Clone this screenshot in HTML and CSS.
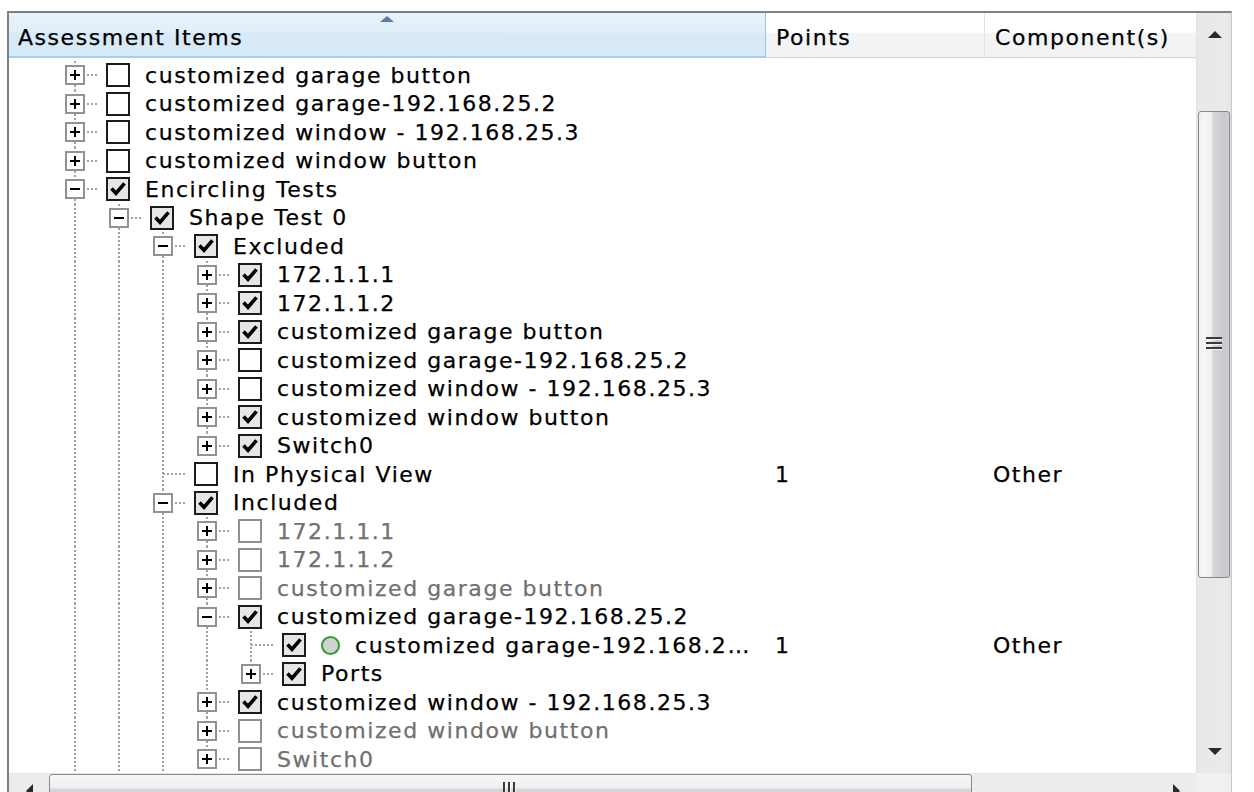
FILE: index.html
```html
<!DOCTYPE html>
<html>
<head>
<meta charset="utf-8">
<title>Assessment Items</title>
<link rel="stylesheet" href="styles.css">
</head>
<body>
<div class="frame">
  <div class="header">
    <div class="hcol h1">Assessment Items</div>
    <div class="hcol h2">Points</div>
    <div class="hcol h3">Component(s)</div>
  </div>

  <div class="vscroll">
    <div class="vbtn"><span class="arr up"></span></div>
    <div class="vthumb"><span class="grip"></span></div>
    <div class="vfill"></div>
    <div class="vbtn"><span class="arr down"></span></div>
  </div>

  <div class="body">
    <div class="row"><div class="tree"><span class="slot node next"><span class="exp plus"></span></span><span class="cb"></span><span class="label">customized garage button</span></div><div class="pts"></div><div class="comp"></div></div>
    <div class="row"><div class="tree"><span class="slot node next"><span class="exp plus"></span></span><span class="cb"></span><span class="label">customized garage-192.168.25.2</span></div><div class="pts"></div><div class="comp"></div></div>
    <div class="row"><div class="tree"><span class="slot node next"><span class="exp plus"></span></span><span class="cb"></span><span class="label">customized window - 192.168.25.3</span></div><div class="pts"></div><div class="comp"></div></div>
    <div class="row"><div class="tree"><span class="slot node next"><span class="exp plus"></span></span><span class="cb"></span><span class="label">customized window button</span></div><div class="pts"></div><div class="comp"></div></div>
    <div class="row"><div class="tree"><span class="slot node next"><span class="exp minus"></span></span><span class="cb on"><svg viewBox="0 0 20 20"><path d="M3.5 9.5 L8 14.2 L16.5 4.3"/></svg></span><span class="label">Encircling Tests</span></div><div class="pts"></div><div class="comp"></div></div>
    <div class="row"><div class="tree"><span class="slot line"></span><span class="slot node next"><span class="exp minus"></span></span><span class="cb on"><svg viewBox="0 0 20 20"><path d="M3.5 9.5 L8 14.2 L16.5 4.3"/></svg></span><span class="label">Shape Test 0</span></div><div class="pts"></div><div class="comp"></div></div>
    <div class="row"><div class="tree"><span class="slot line"></span><span class="slot line"></span><span class="slot node next"><span class="exp minus"></span></span><span class="cb on"><svg viewBox="0 0 20 20"><path d="M3.5 9.5 L8 14.2 L16.5 4.3"/></svg></span><span class="label">Excluded</span></div><div class="pts"></div><div class="comp"></div></div>
    <div class="row"><div class="tree"><span class="slot line"></span><span class="slot line"></span><span class="slot line"></span><span class="slot node next"><span class="exp plus"></span></span><span class="cb on"><svg viewBox="0 0 20 20"><path d="M3.5 9.5 L8 14.2 L16.5 4.3"/></svg></span><span class="label">172.1.1.1</span></div><div class="pts"></div><div class="comp"></div></div>
    <div class="row"><div class="tree"><span class="slot line"></span><span class="slot line"></span><span class="slot line"></span><span class="slot node next"><span class="exp plus"></span></span><span class="cb on"><svg viewBox="0 0 20 20"><path d="M3.5 9.5 L8 14.2 L16.5 4.3"/></svg></span><span class="label">172.1.1.2</span></div><div class="pts"></div><div class="comp"></div></div>
    <div class="row"><div class="tree"><span class="slot line"></span><span class="slot line"></span><span class="slot line"></span><span class="slot node next"><span class="exp plus"></span></span><span class="cb on"><svg viewBox="0 0 20 20"><path d="M3.5 9.5 L8 14.2 L16.5 4.3"/></svg></span><span class="label">customized garage button</span></div><div class="pts"></div><div class="comp"></div></div>
    <div class="row"><div class="tree"><span class="slot line"></span><span class="slot line"></span><span class="slot line"></span><span class="slot node next"><span class="exp plus"></span></span><span class="cb"></span><span class="label">customized garage-192.168.25.2</span></div><div class="pts"></div><div class="comp"></div></div>
    <div class="row"><div class="tree"><span class="slot line"></span><span class="slot line"></span><span class="slot line"></span><span class="slot node next"><span class="exp plus"></span></span><span class="cb"></span><span class="label">customized window - 192.168.25.3</span></div><div class="pts"></div><div class="comp"></div></div>
    <div class="row"><div class="tree"><span class="slot line"></span><span class="slot line"></span><span class="slot line"></span><span class="slot node next"><span class="exp plus"></span></span><span class="cb on"><svg viewBox="0 0 20 20"><path d="M3.5 9.5 L8 14.2 L16.5 4.3"/></svg></span><span class="label">customized window button</span></div><div class="pts"></div><div class="comp"></div></div>
    <div class="row"><div class="tree"><span class="slot line"></span><span class="slot line"></span><span class="slot line"></span><span class="slot node"><span class="exp plus"></span></span><span class="cb on"><svg viewBox="0 0 20 20"><path d="M3.5 9.5 L8 14.2 L16.5 4.3"/></svg></span><span class="label">Switch0</span></div><div class="pts"></div><div class="comp"></div></div>
    <div class="row"><div class="tree"><span class="slot line"></span><span class="slot line"></span><span class="slot node next"></span><span class="cb"></span><span class="label">In Physical View</span></div><div class="pts">1</div><div class="comp">Other</div></div>
    <div class="row"><div class="tree"><span class="slot line"></span><span class="slot line"></span><span class="slot node next"><span class="exp minus"></span></span><span class="cb on"><svg viewBox="0 0 20 20"><path d="M3.5 9.5 L8 14.2 L16.5 4.3"/></svg></span><span class="label">Included</span></div><div class="pts"></div><div class="comp"></div></div>
    <div class="row dis"><div class="tree"><span class="slot line"></span><span class="slot line"></span><span class="slot line"></span><span class="slot node next"><span class="exp plus"></span></span><span class="cb"></span><span class="label">172.1.1.1</span></div><div class="pts"></div><div class="comp"></div></div>
    <div class="row dis"><div class="tree"><span class="slot line"></span><span class="slot line"></span><span class="slot line"></span><span class="slot node next"><span class="exp plus"></span></span><span class="cb"></span><span class="label">172.1.1.2</span></div><div class="pts"></div><div class="comp"></div></div>
    <div class="row dis"><div class="tree"><span class="slot line"></span><span class="slot line"></span><span class="slot line"></span><span class="slot node next"><span class="exp plus"></span></span><span class="cb"></span><span class="label">customized garage button</span></div><div class="pts"></div><div class="comp"></div></div>
    <div class="row"><div class="tree"><span class="slot line"></span><span class="slot line"></span><span class="slot line"></span><span class="slot node next"><span class="exp minus"></span></span><span class="cb on"><svg viewBox="0 0 20 20"><path d="M3.5 9.5 L8 14.2 L16.5 4.3"/></svg></span><span class="label">customized garage-192.168.25.2</span></div><div class="pts"></div><div class="comp"></div></div>
    <div class="row"><div class="tree"><span class="slot line"></span><span class="slot line"></span><span class="slot line"></span><span class="slot line"></span><span class="slot node next"></span><span class="cb on"><svg viewBox="0 0 20 20"><path d="M3.5 9.5 L8 14.2 L16.5 4.3"/></svg></span><span class="dot"></span><span class="label">customized garage-192.168.2…</span></div><div class="pts">1</div><div class="comp">Other</div></div>
    <div class="row"><div class="tree"><span class="slot line"></span><span class="slot line"></span><span class="slot line"></span><span class="slot line"></span><span class="slot node"><span class="exp plus"></span></span><span class="cb on"><svg viewBox="0 0 20 20"><path d="M3.5 9.5 L8 14.2 L16.5 4.3"/></svg></span><span class="label">Ports</span></div><div class="pts"></div><div class="comp"></div></div>
    <div class="row"><div class="tree"><span class="slot line"></span><span class="slot line"></span><span class="slot line"></span><span class="slot node next"><span class="exp plus"></span></span><span class="cb on"><svg viewBox="0 0 20 20"><path d="M3.5 9.5 L8 14.2 L16.5 4.3"/></svg></span><span class="label">customized window - 192.168.25.3</span></div><div class="pts"></div><div class="comp"></div></div>
    <div class="row dis"><div class="tree"><span class="slot line"></span><span class="slot line"></span><span class="slot line"></span><span class="slot node next"><span class="exp plus"></span></span><span class="cb"></span><span class="label">customized window button</span></div><div class="pts"></div><div class="comp"></div></div>
    <div class="row dis"><div class="tree"><span class="slot line"></span><span class="slot line"></span><span class="slot line"></span><span class="slot node"><span class="exp plus"></span></span><span class="cb"></span><span class="label">Switch0</span></div><div class="pts"></div><div class="comp"></div></div>
  </div>

  <div class="hscroll">
    <div class="hbtn"><span class="arr left"></span></div>
    <div class="hthumb"><span class="hgrip"></span></div>
    <div class="hfill"></div>
    <div class="hbtn"><span class="arr right"></span></div>
  </div>
  <div class="corner"></div>
</div>
</body>
</html>
```

FILE: styles.css
```css
html, body {
  margin: 0;
  padding: 0;
  height: 100%;
  overflow: hidden;
  background: #fff;
}

body {
  font-family: "DejaVu Sans", Verdana, sans-serif;
  font-size: 22px;
  letter-spacing: 1.55px;
  color: #000;
  -webkit-text-stroke: 0.25px currentColor;
  --dotv: repeating-linear-gradient(to bottom, #a2a2a2 0 2px, transparent 2px 4px);
  --doth: repeating-linear-gradient(to right, #a2a2a2 0 2px, transparent 2px 4px);
}

.frame {
  margin: 11px 0 0 7px;
  width: 1222px;
  border-top: 2px solid #808080;
  border-left: 2px solid #808080;
  border-right: 1px solid #c8c8c8;
  display: grid;
  grid-template-columns: 1187px 35px;
  grid-template-rows: 45px 715px 35px;
}

/* ---------- header ---------- */
.header {
  grid-column: 1;
  grid-row: 1;
  display: flex;
}

.hcol {
  box-sizing: border-box;
  height: 45px;
  padding-top: 7px;
  line-height: 36px;
  white-space: nowrap;
  flex: none;
}

.h1 {
  position: relative;
  width: 757px;
  padding-left: 9px;
  background: linear-gradient(to bottom, #e6f2fb 0%, #e1effa 45%, #d8eaf7 46%, #d6e9f7 100%);
  border-right: 1px solid #97c6e8;
  border-bottom: 2px solid #a5cfed;
}

.h1::before {
  content: "";
  position: absolute;
  left: 50%;
  top: 3px;
  margin-left: -7px;
  border-left: 7px solid transparent;
  border-right: 7px solid transparent;
  border-bottom: 6px solid #5f7d99;
}

.h2, .h3 {
  padding-left: 10px;
  background: linear-gradient(to bottom, #ffffff 0%, #ffffff 44%, #f3f4f6 45%, #f2f3f5 100%);
  border-bottom: 1px solid #d5d5d5;
}

.h2 {
  width: 219px;
  border-right: 1px solid #e2e3e5;
}

.h3 {
  width: 211px;
}

/* ---------- body ---------- */
.body {
  grid-column: 1;
  grid-row: 2;
  padding-top: 3px;
  overflow: hidden;
  background: #fff;
}

.row {
  display: flex;
  height: 28.5px;
  align-items: center;
  white-space: nowrap;
}

.tree {
  width: 757px;
  flex: none;
  height: 100%;
  display: flex;
  align-items: center;
  padding-left: 44px;
  box-sizing: border-box;
  overflow: hidden;
}

.slot {
  width: 44px;
  height: 100%;
  flex: none;
  display: flex;
  align-items: center;
  justify-content: center;
}

.slot.line {
  background: var(--dotv) 21px 0 / 2px 100% no-repeat;
}

.slot.node {
  background:
    var(--doth) 22px 50% / 22px 2px no-repeat,
    var(--dotv) 21px 0 / 2px 50% no-repeat;
}

.slot.node.next {
  background:
    var(--doth) 22px 50% / 22px 2px no-repeat,
    var(--dotv) 21px 0 / 2px 100% no-repeat;
}

.exp {
  width: 20px;
  height: 20px;
  box-sizing: border-box;
  border: 2px solid #929292;
  background: #fff;
}

.exp.plus {
  background:
    linear-gradient(#000, #000) center / 10px 2px no-repeat,
    linear-gradient(#000, #000) center / 2px 10px no-repeat,
    #fff;
}

.exp.minus {
  background:
    linear-gradient(#000, #000) center / 10px 2px no-repeat,
    #fff;
}

.cb {
  width: 24px;
  height: 24px;
  box-sizing: border-box;
  border: 2px solid #1c1c1c;
  background: #fff;
  margin-left: 9px;
  flex: none;
  display: flex;
  align-items: center;
  justify-content: center;
}

.cb.on {
  background: #e6e6e6;
}

.cb svg {
  width: 20px;
  height: 20px;
  fill: none;
  stroke: #000;
  stroke-width: 3.6;
  stroke-linejoin: miter;
}

.dis .cb {
  border-color: #8f8f8f;
}

.dot {
  width: 19px;
  height: 19px;
  box-sizing: border-box;
  border-radius: 50%;
  border: 2px solid #2f9e2f;
  background: #d2d2d2;
  margin-left: 15px;
  flex: none;
}

.label {
  margin-left: 15px;
}

.dis .label {
  color: #707070;
}

.pts {
  width: 219px;
  flex: none;
  box-sizing: border-box;
  padding-left: 9px;
}

.comp {
  flex: 1;
  padding-left: 8px;
}

/* ---------- vertical scrollbar ---------- */
.vscroll {
  grid-column: 2;
  grid-row: 1 / 3;
  display: flex;
  flex-direction: column;
  align-items: center;
  background: linear-gradient(to right, #dcdcdc 0, #e8e8e8 1px, #eaeaea 85%, #e4e4e4 100%);
}

.vbtn {
  height: 43px;
  width: 100%;
  flex: none;
  display: flex;
  align-items: center;
  justify-content: center;
}

.arr {
  width: 0;
  height: 0;
}

.arr.up {
  border-left: 7px solid transparent;
  border-right: 7px solid transparent;
  border-bottom: 7px solid #2a2a2a;
  margin-left: 2px;
}

.arr.down {
  border-left: 7px solid transparent;
  border-right: 7px solid transparent;
  border-top: 7px solid #2a2a2a;
  margin-left: 2px;
}

.arr.left {
  border-top: 7px solid transparent;
  border-bottom: 7px solid transparent;
  border-right: 7px solid #2a2a2a;
}

.arr.right {
  border-top: 7px solid transparent;
  border-bottom: 7px solid transparent;
  border-left: 7px solid #2a2a2a;
}

.vthumb {
  margin-top: 55px;
  width: 32px;
  height: 467px;
  flex: none;
  box-sizing: border-box;
  border: 1px solid #888;
  border-radius: 3px;
  background: linear-gradient(to right, #f1f1f1 0%, #f6f6f6 20%, #ececec 44%, #d4d5d9 46%, #c8c9ce 85%, #cdced2 100%);
  display: flex;
  align-items: center;
  justify-content: center;
}

.grip {
  width: 16px;
  height: 15px;
  background: repeating-linear-gradient(to bottom, #3a3a3a 0 2px, #f4f4f4 2px 3px, transparent 3px 5px);
}

.vfill {
  flex: 1;
}

/* ---------- horizontal scrollbar ---------- */
.hscroll {
  grid-column: 1;
  grid-row: 3;
  display: flex;
  background: linear-gradient(to bottom, #e2e2e2 0, #ececec 1px, #ececec 100%);
}

.hbtn {
  width: 40px;
  flex: none;
  display: flex;
  align-items: center;
  justify-content: center;
}

.hthumb {
  margin-top: 1px;
  width: 923px;
  height: 32px;
  flex: none;
  box-sizing: border-box;
  border: 1px solid #888;
  border-radius: 3px;
  background: linear-gradient(to bottom, #f6f6f6 0%, #f0f0f0 44%, #d6d7db 46%, #c9cace 100%);
  display: flex;
  align-items: center;
  justify-content: center;
}

.hgrip {
  width: 15px;
  height: 16px;
  background: repeating-linear-gradient(to right, #3a3a3a 0 2px, #f4f4f4 2px 3px, transparent 3px 5px);
}

.hfill {
  flex: 1;
}

.corner {
  grid-column: 2;
  grid-row: 3;
  background: #f0f0f0;
}
```
